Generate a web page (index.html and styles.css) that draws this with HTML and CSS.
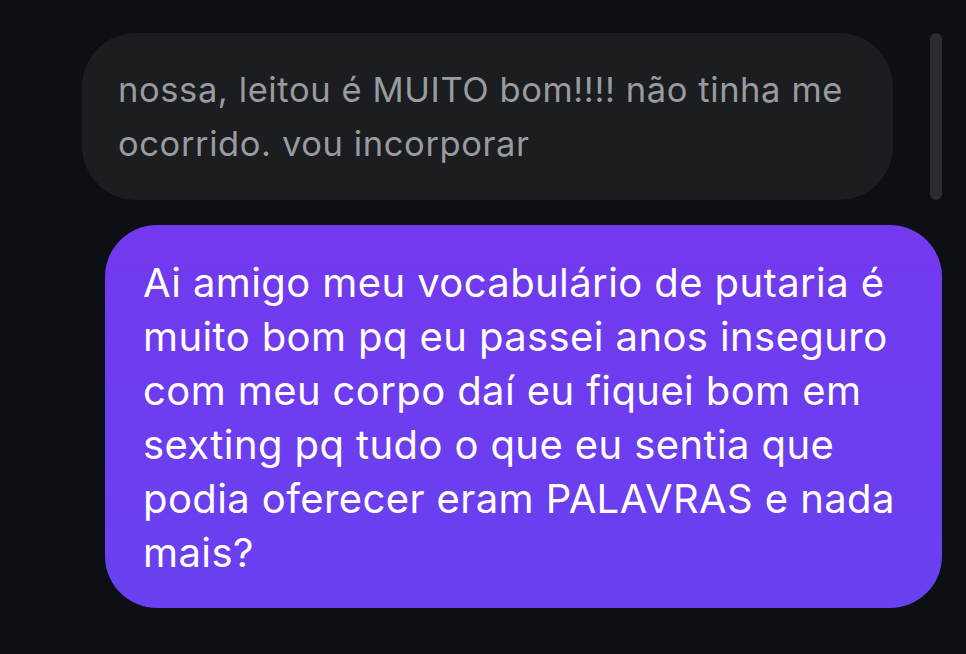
FILE: index.html
```html
<!DOCTYPE html>
<html lang="pt-BR">
<head>
<meta charset="utf-8">
<title>Chat</title>
<link rel="stylesheet" href="styles.css">
</head>
<body>
<div class="chat">
  <div class="bubble received">nossa, leitou é MUITO bom!!!! não tinha me<br>ocorrido. vou incorporar</div>
  <div class="bubble sent">Ai amigo meu vocabulário de putaria é<br>muito bom pq eu passei anos inseguro<br>com meu corpo daí eu fiquei bom em<br>sexting pq tudo o que eu sentia que<br>podia oferecer eram PALAVRAS e nada<br>mais?</div>
  <div class="scrollbar"></div>
</div>
</body>
</html>
```
FILE: styles.css
```css
html, body {
  margin: 0;
  padding: 0;
  background: #0c0f13;
  height: 100%;
  overflow: hidden;
}
.chat {
  position: relative;
  display: flex;
  flex-direction: column;
  align-items: flex-start;
  gap: 25px;
  padding-top: 33px;
  font-family: Inter, "Noto Sans", sans-serif;
}
.bubble {
  box-sizing: border-box;
  white-space: nowrap;
  line-height: 54px;
}
.received {
  margin-left: 82px;
  width: 811px;
  height: 167px;
  padding: 30px 36px 0 36px;
  background: #1b1d21;
  border-radius: 54px;
  color: #9a9b9e;
  font-size: 34.5px;
  letter-spacing: 0.6px;
}
.sent {
  margin-left: 105px;
  width: 837px;
  height: 383px;
  padding: 31px 38px 0 38px;
  background: linear-gradient(180deg, #7339ee 0%, #6841f1 100%);
  border-radius: 52px;
  color: #ffffff;
  font-size: 40px;
  letter-spacing: 0.4px;
}
.scrollbar {
  position: absolute;
  left: 930px;
  top: 33px;
  width: 12px;
  height: 167px;
  border-radius: 6px;
  background: #2a2c30;
}
```
